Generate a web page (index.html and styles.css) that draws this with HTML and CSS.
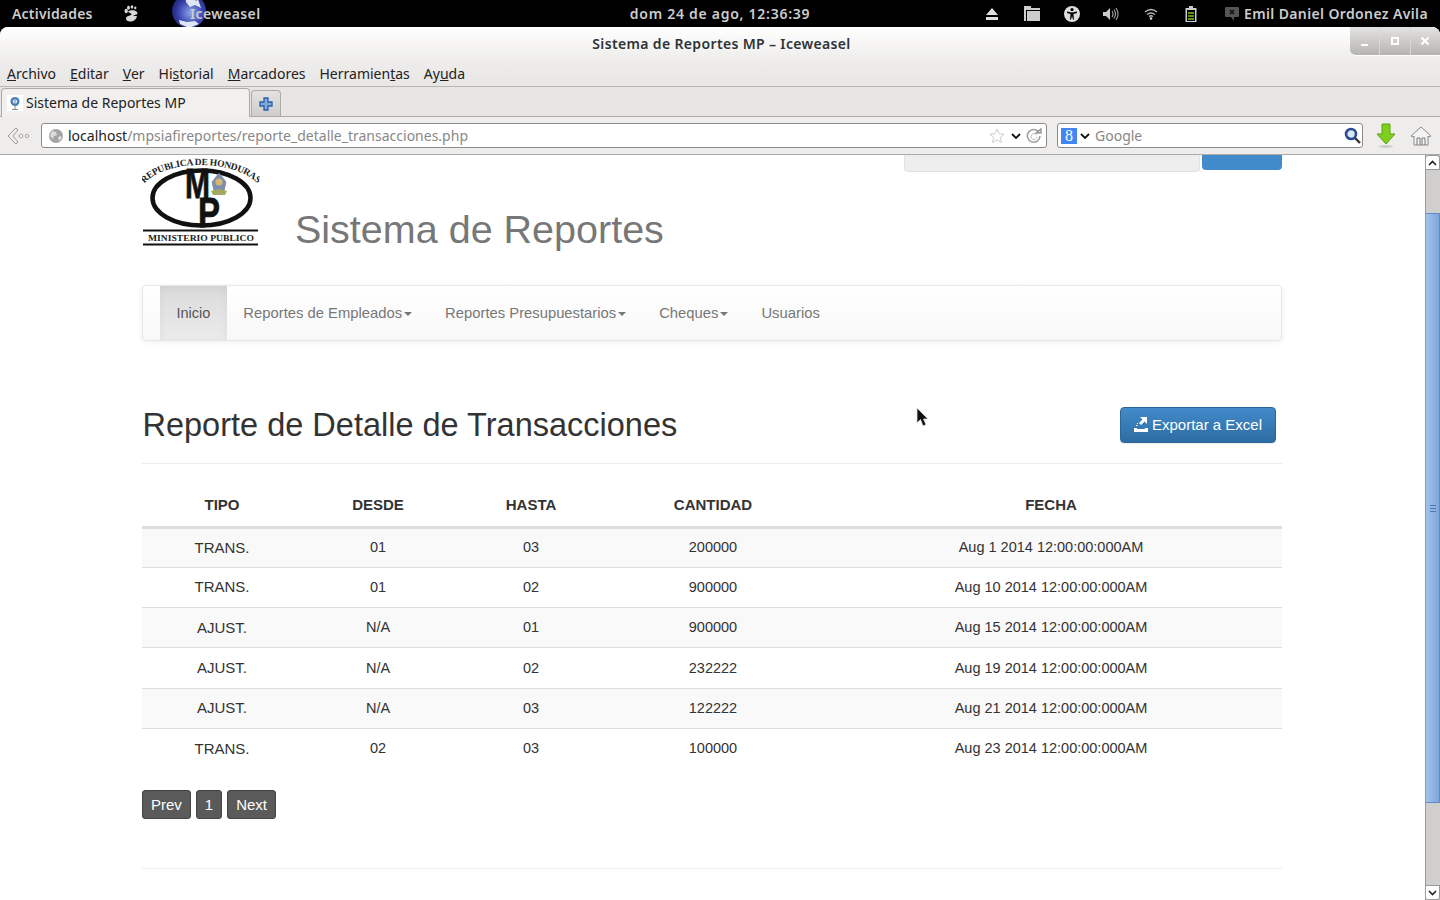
FILE: index.html
```html
<!DOCTYPE html>
<html lang="es">
<head>
	<meta charset="UTF-8">
	<title>Sistema de Reportes MP</title>
	<link rel="stylesheet" href="styles.css">
</head>
<body>
	<div class="top_bar">
		<div class="top_left">
			<span class="activities">Actividades</span>
			<svg class="foot" width="14" height="17" viewBox="0 0 14 17"><path d="M4 6.500C6 5 11 4.500 13 7c1.500 3.500-1 9-6 9.500C3 17 1 14 2.500 12c1-1.500 4-1 5-2.500C8 8.500 5 8 4 6.500z" fill="#d8d8d8"/><path d="M9 10.500l5-1.500v2.500z" fill="#000"/><ellipse cx="2.200" cy="6" rx="1.700" ry="2.200" fill="#d8d8d8"/><ellipse cx="4.500" cy="2.800" rx="1.500" ry="2" fill="#d8d8d8"/><ellipse cx="8" cy="2" rx="1.300" ry="1.700" fill="#d8d8d8"/><ellipse cx="11.300" cy="3" rx="1.100" ry="1.400" fill="#d8d8d8"/></svg>
			<span class="app_name">
				<svg class="globe" width="36" height="34" viewBox="0 0 36 34"><defs><radialGradient id="gl" cx="55%" cy="55%" r="60%"><stop offset="0" stop-color="#8fa6e8"/><stop offset=".6" stop-color="#3a45b0"/><stop offset="1" stop-color="#1c1f70"/></radialGradient></defs><circle cx="18" cy="17" r="17" fill="url(#gl)"/><path d="M14 0l6 6 7-1 3 9-6-3-5 2-4-5zM8 26l8 2 8-1 4 3-10 4-9-4z" fill="#dfe5f5"/><path d="M21 0h7v5l-3 2-4-3z" fill="#777"/></svg>
				Iceweasel
			</span>
		</div>
		<div class="clock">dom 24 de ago, 12:36:39</div>
		<div class="top_right">
			<svg class="ic1" width="14" height="12" viewBox="0 0 14 12"><path d="M7 0l6 7H1zM1 9h12v3H1z" fill="#ddd"/></svg>
			<svg class="ic2" width="16" height="15" viewBox="0 0 16 15"><path d="M0 0h7v2h9v13H0z" fill="#ccc"/><path d="M2 4h14v1H2zM2 4h1v11H2z" fill="#000"/></svg>
			<svg class="ic3" width="16" height="16" viewBox="0 0 16 16"><circle cx="8" cy="8" r="8" fill="#ddd"/><circle cx="8" cy="3.600" r="1.600" fill="#000"/><path d="M3 5.600l5 1 5-1v1.400l-3.600 1 .6 5.600H9L8 10l-1 3.600H5.900l.7-5.600L3 7z" fill="#000"/></svg>
			<svg class="ic4" width="16" height="14" viewBox="0 0 16 14"><path d="M0 5h3l4-4v12l-4-4H0z" fill="#ccc"/><path d="M9 4q2 3 0 6M11 2.500q3 4.500 0 9M13 1q4 6 0 12" fill="none" stroke="#999" stroke-width="1.200"/></svg>
			<svg class="ic5" width="14" height="12" viewBox="0 0 14 12"><path d="M1 4q6-5 12 0M3 6.500q4-3 8 0M5 8.500q2-1.500 4 0" fill="none" stroke="#bbb" stroke-width="1.300"/><circle cx="7" cy="10.500" r="1.300" fill="#ddd"/></svg>
			<svg class="ic6" width="12" height="16" viewBox="0 0 12 16"><path d="M4 0h4v2h3.500v14H.5V2H4z" fill="#ccc"/><path d="M2 4h8v11H2z" fill="#000"/><path d="M3 6h6v2H3zM3 9h6v2H3zM3 12h6v2H3z" fill="#5a9a12"/></svg>
			<span class="user"><svg width="14" height="14" viewBox="0 0 14 14"><path d="M1 0h12a1 1 0 0 1 1 1v8a1 1 0 0 1-1 1H9v4l-3-4H1a1 1 0 0 1-1-1V1a1 1 0 0 1 1-1z" fill="#555"/><path d="M5 3l4 4M9 3L5 7" stroke="#111" stroke-width="1.500"/></svg>Emil Daniel Ordonez Avila</span>
		</div>
	</div>

	<div class="window">
		<div class="title_bar">
			<span class="window_title">Sistema de Reportes MP – Iceweasel</span>
			<div class="window_btns">
				<span class="wbtn"><b class="w_min"></b></span>
				<span class="wbtn"><b class="w_max"></b></span>
				<span class="wbtn"><svg width="10" height="10" viewBox="0 0 10 10"><path d="M1.500 1.500l7 7M8.500 1.500l-7 7" stroke="#fff" stroke-width="2.200"/></svg></span>
			</div>
		</div>
		<div class="menu_bar">
			<span><u>A</u>rchivo</span>
			<span><u>E</u>ditar</span>
			<span><u>V</u>er</span>
			<span>Hi<u>s</u>torial</span>
			<span><u>M</u>arcadores</span>
			<span>Herramien<u>t</u>as</span>
			<span>Ay<u>u</u>da</span>
		</div>
		<div class="tab_bar">
			<div class="tab">
				<svg width="16" height="16" viewBox="0 0 16 16"><rect width="16" height="16" fill="#fff"/><circle cx="8" cy="6.500" r="4.500" fill="#3d7fc0"/><circle cx="8" cy="6.500" r="2.200" fill="#dfeaf5"/><path d="M8 2v12M5 14.500h6" stroke="#888"/></svg>
				Sistema de Reportes MP
			</div>
			<div class="new_tab"><svg width="14" height="14" viewBox="0 0 14 14"><path d="M5 1h4v4h4v4H9v4H5V9H1V5h4z" fill="#7fa9dc" stroke="#2a5da8" stroke-width="1.300"/></svg></div>
		</div>
		<div class="nav_bar">
			<svg class="back" width="24" height="20" viewBox="0 0 24 20"><path d="M10 2L2 10l8 8 2-2-5-6 5-6z" fill="#eee" stroke="#999"/><circle cx="15" cy="10" r="2" fill="none" stroke="#aaa"/><circle cx="21" cy="10" r="1.700" fill="none" stroke="#aaa"/></svg>
			<div class="url_box">
				<svg width="16" height="16" viewBox="0 0 16 16"><circle cx="8" cy="8" r="7" fill="#a4a4a4"/><path d="M4 3l4 1 1 3-3 1-1 3-3-3zM10 9l3-1 1 2-3 3z" fill="#dcdcdc"/></svg>
				<span class="url"><span class="host">localhost</span>/mpsiafireportes/reporte_detalle_transacciones.php</span>
				<svg class="star" width="16" height="16" viewBox="0 0 16 16"><path d="M8 1l2.100 4.700 5 .5-3.800 3.300 1.200 5L8 11.900 3.500 14.500l1.200-5L.9 6.200l5-.5z" fill="#fff" stroke="#ccc"/></svg>
				<svg class="chev" width="10" height="6" viewBox="0 0 10 6"><path d="M1 1l4 4 4-4" fill="none" stroke="#111" stroke-width="1.800"/></svg>
				<svg class="reload" width="16" height="16" viewBox="0 0 16 16"><path d="M13 4.500A6.300 6.300 0 1 0 14 8M10 5h5V1z" fill="none" stroke="#999" stroke-width="1.500"/><path d="M10.500 7a3 3 0 1 0 .5 2" fill="none" stroke="#bbb"/></svg>
			</div>
			<div class="search_box">
				<span class="g_icon">8</span>
				<svg class="chev" width="10" height="6" viewBox="0 0 10 6"><path d="M1 1l4 4 4-4" fill="none" stroke="#111" stroke-width="1.800"/></svg>
				<span class="search_text">Google</span>
				<svg width="17" height="17" viewBox="0 0 17 17"><circle cx="7" cy="7" r="5" fill="#dbe6f5" stroke="#2a4a94" stroke-width="2.600"/><path d="M11 11l5 5" stroke="#333" stroke-width="2.400"/></svg>
			</div>
			<svg class="download" width="22" height="26" viewBox="0 0 22 26"><path d="M7 1h8v10h5L11 21 2 11h5z" fill="#7fcf1e" stroke="#5fa012"/><ellipse cx="11" cy="23.500" rx="7" ry="1.500" fill="#ccc"/></svg>
			<svg class="home" width="22" height="22" viewBox="0 0 22 22"><path d="M11 2L1 11l2 1 1-1v9h14v-9l1 1 2-1z" fill="#f4f4f4" stroke="#888"/><path d="M7 20v-7h3v7M12 20v-7h3v7" fill="none" stroke="#777"/></svg>
		</div>

		<div class="viewport">
			<div class="page">
				<div class="container">
					<div class="clipped_form">
						<div class="search_input"></div>
						<div class="search_btn"></div>
					</div>
					<div class="brand">
						<svg class="logo" width="118" height="92" viewBox="0 0 118 92">
							<defs><path id="arc" d="M3 28C24 4 92 4 115 28"/></defs>
							<text class="logo_arc"><textPath href="#arc" startOffset="50%" text-anchor="middle" textLength="122">REPUBLICA DE HONDURAS</textPath></text>
							<ellipse cx="59.500" cy="43" rx="49" ry="27.500" fill="none" stroke="#111" stroke-width="4.500"/>
							<text class="logo_m" x="43" y="43" textLength="25" lengthAdjust="spacingAndGlyphs">M</text>
							<text class="logo_m" x="56" y="72" textLength="22" lengthAdjust="spacingAndGlyphs">P</text>
							<path d="M77 18l7 9-2 9H72l-2-9z" fill="#7d8fb0" stroke="#777" stroke-width=".6"/>
							<circle cx="77" cy="27" r="3.500" fill="#d8b96a"/>
							<path d="M69 36l8-2 8 2-2 4H71z" fill="#a3a95f"/>
							<path d="M1 75.500h115M1 89.500h115" stroke="#111" stroke-width="2"/>
							<text class="logo_bottom" x="6" y="86" textLength="106" lengthAdjust="spacingAndGlyphs">MINISTERIO PUBLICO</text>
						</svg>
						<h1>Sistema de Reportes</h1>
					</div>
					<nav class="navbar">
						<a class="active">Inicio</a>
						<a>Reportes de Empleados<i class="caret"></i></a>
						<a>Reportes Presupuestarios<i class="caret"></i></a>
						<a>Cheques<i class="caret"></i></a>
						<a>Usuarios</a>
					</nav>
					<div class="page_header">
						<h2>Reporte de Detalle de Transacciones</h2>
						<a class="btn_export"><svg width="14" height="15" viewBox="0 0 14 15"><path d="M0 11h2.500l1 1h7l1-1H14v4H0zM6 0h7v7l-2.500-2.500L7 8 5 6l3.500-3.500z" fill="#fff"/><path d="M2 8h1.500v1H2zM3 6h1v1H3z" fill="#fff"/></svg>Exportar a Excel</a>
					</div>
					<table class="report">
						<colgroup><col class="c1"><col class="c2"><col class="c3"><col class="c4"><col class="c5"></colgroup>
						<thead>
							<tr><th>TIPO</th><th>DESDE</th><th>HASTA</th><th>CANTIDAD</th><th>FECHA</th></tr>
						</thead>
						<tbody>
							<tr><td>TRANS.</td><td>01</td><td>03</td><td>200000</td><td>Aug 1 2014 12:00:00:000AM</td></tr>
							<tr><td>TRANS.</td><td>01</td><td>02</td><td>900000</td><td>Aug 10 2014 12:00:00:000AM</td></tr>
							<tr><td>AJUST.</td><td>N/A</td><td>01</td><td>900000</td><td>Aug 15 2014 12:00:00:000AM</td></tr>
							<tr><td>AJUST.</td><td>N/A</td><td>02</td><td>232222</td><td>Aug 19 2014 12:00:00:000AM</td></tr>
							<tr><td>AJUST.</td><td>N/A</td><td>03</td><td>122222</td><td>Aug 21 2014 12:00:00:000AM</td></tr>
							<tr><td>TRANS.</td><td>02</td><td>03</td><td>100000</td><td>Aug 23 2014 12:00:00:000AM</td></tr>
						</tbody>
					</table>
					<div class="pager">
						<a>Prev</a><a>1</a><a>Next</a>
					</div>
					<hr class="foot_rule">
				</div>
			</div>
			<div class="scrollbar">
				<div class="sb_btn sb_up"><svg width="9" height="6" viewBox="0 0 9 6"><path d="M1 5l3.500-3.500L8 5" fill="none" stroke="#222" stroke-width="1.600"/></svg></div>
				<div class="sb_track">
					<div class="sb_thumb"><i></i></div>
				</div>
				<div class="sb_btn sb_down"><svg width="9" height="6" viewBox="0 0 9 6"><path d="M1 1l3.500 3.500L8 1" fill="none" stroke="#222" stroke-width="1.600"/></svg></div>
			</div>
		</div>
	</div>
	<svg class="cursor" width="14" height="21" viewBox="0 0 14 21"><path d="M1 1v15l3.500-3.500L7 19l3-1.500-2.500-5.500H12z" fill="#111" stroke="#ddd" stroke-width=".8"/></svg>
</body>
</html>
```

FILE: styles.css
```css
*{box-sizing: border-box;}
html,body{margin:0;height:100%;overflow: hidden;}
body{background:#000;font-family:"Noto Sans","DejaVu Sans",sans-serif;position:relative;}

/* gnome shell bar */
.top_bar{height:27px;background:#000;color:#ccc;display:grid;grid-template-columns:1fr auto 1fr;align-items:center;font-size:14px;font-weight:600;letter-spacing:.37px;overflow:hidden;}
.top_left{display:flex;align-items:center;padding-left:12px;}
.activities{width:112px;letter-spacing:.2px;}
.foot{margin-right:33px;}
.app_name{position:relative;padding-left:19px;isolation:isolate;}
.globe{position:absolute;left:0;top:-10px;z-index:-1;}
.clock{text-align:center;letter-spacing:.73px;}
.top_right{display:flex;align-items:center;justify-content:flex-end;padding-right:12px;}
.top_right svg{flex:none;}
.ic1{margin-right:25px;}
.ic2{margin-right:24px;}
.ic3{margin-right:23px;}
.ic4{margin-right:25px;}
.ic5{margin-right:27px;}
.ic6{margin-right:28px;}
.user{display:flex;align-items:center;gap:5px;}

/* window chrome */
.window{height:873px;display:flex;flex-direction:column;background:#e8e7e5;border-radius:8px 8px 0 0;overflow:hidden;color:#222;font-size:14px;}
.title_bar{height:33px;flex:none;background:linear-gradient(#fff,#eeedeb);position:relative;display:flex;justify-content:center;align-items:center;font-weight:600;font-size:14px;color:#2e3436;letter-spacing:.35px;}
.window_title{padding-left:3px;}
.window_btns{position:absolute;right:0;top:0;height:29px;width:90px;display:flex;background:linear-gradient(#e4e3e1,#b5b4b2);border-radius:0 7px 0 6px;border-bottom:1px solid #fff;}
.wbtn{flex:1;display:flex;align-items:center;justify-content:center;border-left:1px solid #d8d7d5;}
.wbtn:first-child{border-left:none;}
.w_min{display:block;width:7px;height:2px;background:#fff;margin-top:7px;}
.w_max{display:block;width:8px;height:8px;border:2px solid #fff;}
.menu_bar{height:27px;flex:none;background:linear-gradient(#eeedeb,#e8e7e5);border-bottom:1px solid #b9b8b6;display:flex;align-items:center;padding-left:7px;gap:14px;font-size:14px;}
.tab_bar{height:30px;flex:none;background:#e7e6e4;border-bottom:1px solid #aaa;display:flex;align-items:flex-end;padding:1px 0 0 1px;position:relative;}
.tab{width:249px;height:29px;background:#f1f0ee;border:1px solid #aaa;border-bottom:none;border-radius:4px 4px 0 0;display:flex;align-items:center;gap:3px;padding:0 0 1px 5px;font-size:14px;margin-bottom:-1px;}
.new_tab{width:30px;height:26px;margin-left:1px;border:1px solid #aaa;border-bottom:none;border-radius:4px 4px 0 0;background:linear-gradient(#e4e3e1,#cfcecc);display:flex;align-items:center;justify-content:center;}
.nav_bar{height:38px;flex:none;background:#eeedeb;border-bottom:1px solid #aaa;display:flex;align-items:center;padding:0 7px 0 6px;}
.back{margin-right:11px;}
.url_box{width:1006px;height:25px;background:#fff;border:1px solid #8d8c8a;border-radius:3px;display:flex;align-items:center;padding:0 4px 0 6px;margin-right:10px;}
.url{flex:1;margin-left:4px;color:#888;font-size:14px;}
.host{color:#222;}
.url_box .chev{margin:0 5px 0 6px;}
.search_box{width:306px;height:25px;background:#fff;border:1px solid #8d8c8a;border-radius:3px;display:flex;align-items:center;padding:0 1px 0 3px;margin-right:12px;}
.g_icon{width:16px;height:16px;background:#4285f4;color:#fff;font-family:"Liberation Serif",serif;font-size:16px;line-height:16px;text-align:center;}
.search_box .chev{margin:0 0 0 3px;}
.search_text{flex:1;margin-left:5px;color:#888;font-size:14px;}
.download{margin-right:13px;}

/* page area */
.viewport{flex:1;display:flex;min-height:0;background:#fff;}
.page{flex:1;min-width:0;overflow:hidden;font-family:"Liberation Sans",Arial,sans-serif;color:#333;}
.container{width:1140px;margin:0 0 0 142px;}
.clipped_form{height:17px;display:flex;justify-content:flex-end;gap:2px;}
.search_input{width:296px;background:#eee;border:1px solid #e2e2e2;border-top:none;border-radius:0 0 4px 4px;}
.search_btn{width:80px;height:15px;background:#428bca;border-radius:0 0 4px 4px;}
.brand{display:flex;margin-top:-17px;height:130px;}
.logo{flex:none;margin:0 35px 0 0;display:block;}
.logo_arc{font:bold 9.500px "Liberation Serif",serif;fill:#222;}
.logo_m{font:bold 43px "Liberation Sans",sans-serif;fill:#111;stroke:#111;stroke-width:.8px;}
.logo_bottom{font:bold 9px "Liberation Serif",serif;fill:#222;}
h1{margin:52px 0 0;font-weight:400;font-size:39.500px;line-height:44px;color:#777;}
.navbar{height:56px;border:1px solid #e7e7e7;border-radius:4px;background:linear-gradient(#fff,#f8f8f8);box-shadow:0 1px 5px rgba(0,0,0,.075);display:flex;padding-left:17px;font-size:14.800px;}
.navbar a{display:flex;align-items:center;padding:0 16.500px;color:#777;height:54px;}
.navbar a.active{color:#555;background:linear-gradient(#dbdbdb,#ebebeb);box-shadow:inset 0 3px 9px rgba(0,0,0,.05);font-size:14.500px;}
.caret{width:0;height:0;margin-left:2px;margin-top:2px;border-top:4.500px solid #777;border-left:4.500px solid transparent;border-right:4.500px solid transparent;}
.page_header{height:123px;margin-bottom:20px;border-bottom:1px solid #eee;display:flex;justify-content:space-between;align-items:center;padding:45px 6px 0 .5px;}
h2{margin:0;font-weight:400;font-size:32.500px;line-height:36px;color:#333;}
.btn_export{display:flex;align-items:center;gap:4px;width:156px;height:36px;justify-content:center;color:#fff;font-size:15px;background:linear-gradient(#428bca,#2d6ca2);border:1px solid #2b669a;border-radius:4px;box-shadow:0 1px 1px rgba(0,0,0,.075);}
.report{width:1140px;border-collapse:collapse;table-layout:fixed;font-size:14.500px;}
.c1{width:160px;}
.c2{width:152px;}
.c3{width:154px;}
.c4{width:210px;}
.c5{width:464px;}
th{height:43px;padding:0;border-bottom:3px solid #ddd;font-size:15px;font-weight:700;color:#333;text-align:center;}
td{height:40.300px;padding:0 0 1px;text-align:center;border-top:1px solid #ddd;}
td:first-child{font-size:15px;}
th:last-child,td:last-child{padding-left:2px;}
tbody tr:first-child td{border-top:none;}
tbody tr:nth-child(odd){background:#f9f9f9;}
.pager{display:flex;margin-top:21px;gap:5px;}
.pager a{height:29px;padding:0 8px;line-height:27px;color:#fff;background:#5a5a5a;border:1px solid #444;border-radius:3px;font-size:15px;}
.foot_rule{margin:49px 0 0;border:none;border-top:1px solid #eee;}

/* scrollbar */
.scrollbar{width:15px;flex:none;background:#d0cfcd;border-left:1px solid #9a9a98;display:flex;flex-direction:column;}
.sb_btn{height:15px;flex:none;background:#fff;border:1px solid #999;border-left:none;display:flex;align-items:center;justify-content:center;}
.sb_up{border-radius:3px 3px 0 0;}
.sb_down{border-radius:0 0 3px 3px;}
.sb_track{flex:1;padding-top:43px;padding-bottom:82px;display:flex;}
.sb_thumb{flex:1;background:linear-gradient(90deg,#a3c2ea,#7ea8dc);border:1px solid #5f8cc4;border-left:none;display:flex;align-items:center;justify-content:center;}
.sb_thumb i{width:6px;height:7px;background:linear-gradient(#4d79b5 1px,transparent 1px,transparent 3px,#4d79b5 3px,#4d79b5 4px,transparent 4px,transparent 6px,#4d79b5 6px);}

.cursor{position:absolute;left:916px;top:407px;}
```
